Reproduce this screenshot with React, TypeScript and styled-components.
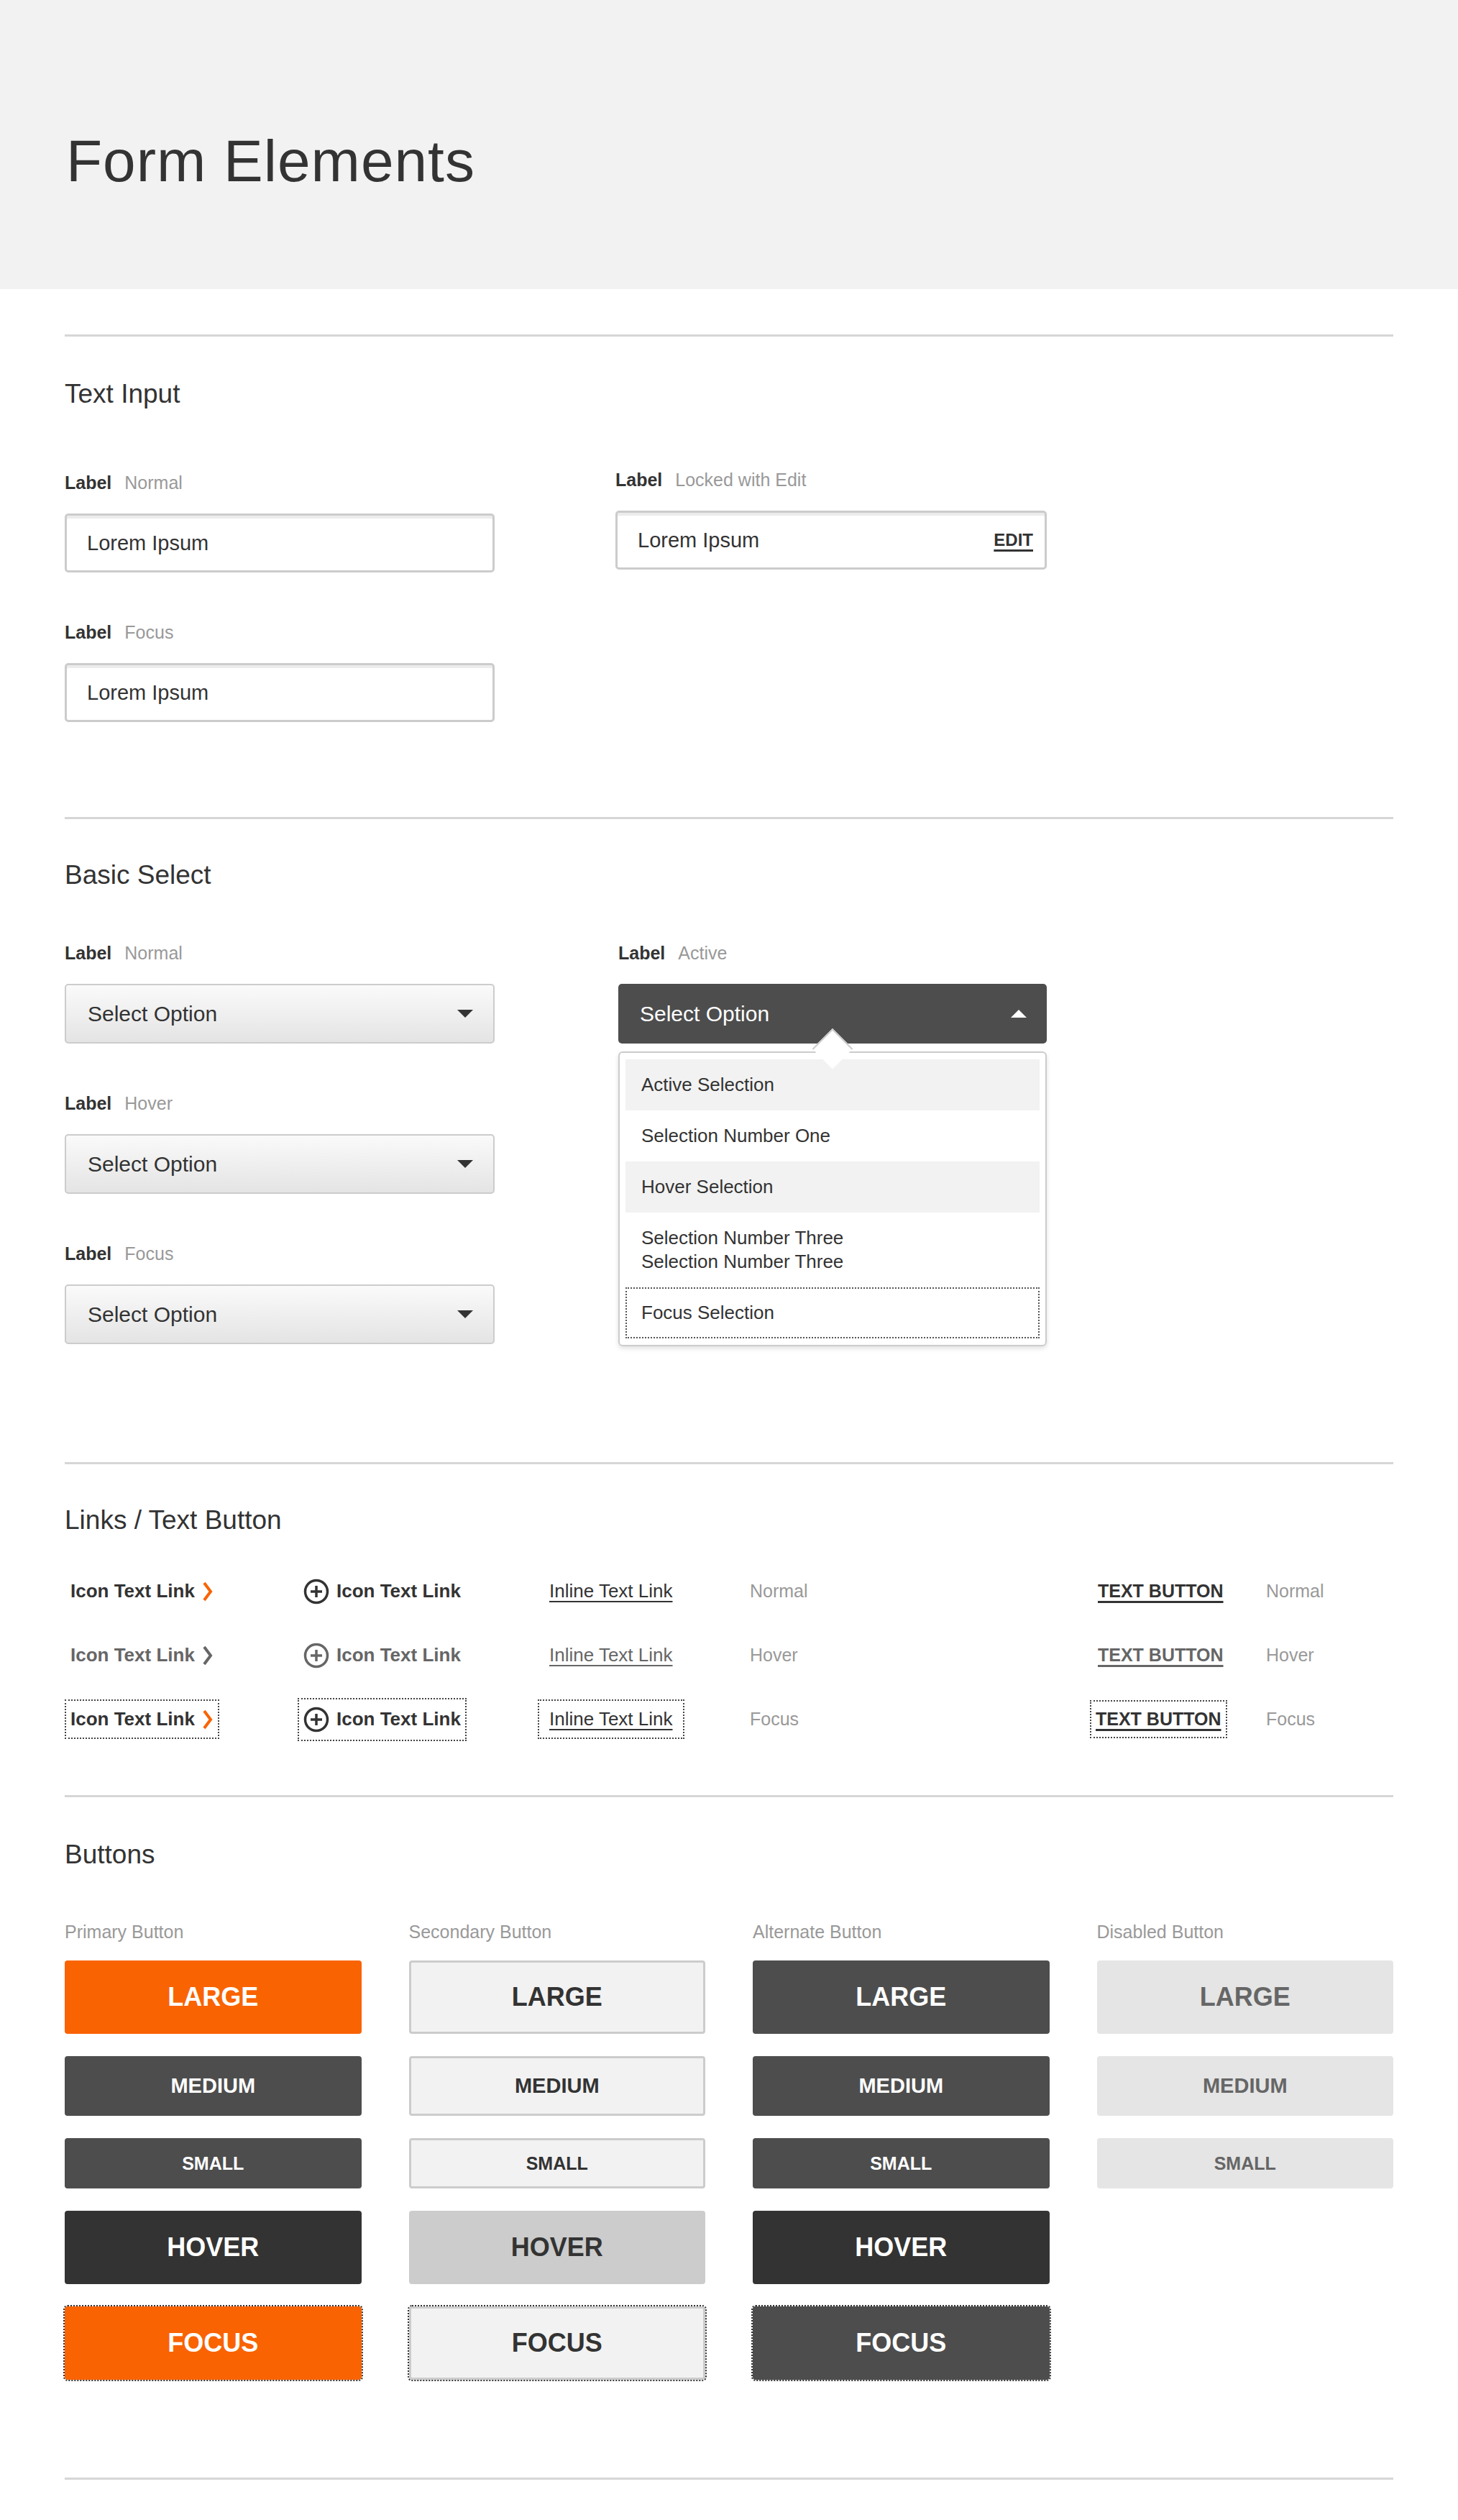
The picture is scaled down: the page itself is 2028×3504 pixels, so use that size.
import React from 'react';
import styled, { createGlobalStyle, css } from 'styled-components';

const Global = createGlobalStyle`
  body { margin: 0; background: #fff; font-family: "Liberation Sans", Arial, sans-serif; color: #333; }
`;

const Header = styled.header`
  background: #f2f2f2;
  height: 402px;
  box-sizing: border-box;
  padding: 222px 0 0 92px;
`;
const Title = styled.h1`
  margin: 0;
  font-weight: 300;
  font-size: 82px;
  line-height: 100px;
  color: #333;
  font-family: "Liberation Sans", Arial, sans-serif;
  letter-spacing: 1px;
  transform: translateY(-48px);
`;

const Content = styled.main`
  padding: 63px 90px 0;
`;

const Rule = styled.hr<{ $after: number }>`
  border: 0;
  border-top: 3px solid #d6d6d6;
  margin: 0 0 ${(p) => p.$after}px;
`;

const SectionTitle = styled.h2`
  margin: 0;
  font-weight: 400;
  font-size: 37px;
  line-height: 44px;
  color: #333;
`;

const TwoCols = styled.div<{ $top: number; $bottom: number }>`
  display: grid;
  grid-template-columns: 598px 600px;
  column-gap: 168px;
  margin: ${(p) => p.$top}px 0 ${(p) => p.$bottom}px;
  align-items: start;
`;

const Stack = styled.div`
  display: flex;
  flex-direction: column;
  gap: 68px;
`;

const Field = styled.div`
  display: flex;
  flex-direction: column;
  gap: 28px;
`;

const LabelRow = styled.div`
  font-size: 25px;
  line-height: 30px;
  display: flex;
  gap: 18px;
`;
const LabelStrong = styled.span`
  font-weight: 700;
  color: #333;
`;
const LabelState = styled.span`
  color: #999;
`;

const InputBox = styled.div`
  height: 82px;
  box-sizing: border-box;
  border: 3px solid #ccc;
  border-radius: 5px;
  box-shadow: inset 0 4px 0 #ececec;
  display: flex;
  align-items: center;
  justify-content: space-between;
  padding: 0 16px 0 28px;
  font-size: 29px;
  color: #333;
`;
const EditLink = styled.span`
  font-weight: 700;
  font-size: 24px;
  text-decoration: underline;
  text-underline-offset: 5px;
  text-decoration-thickness: 3px;
`;

const SelectBox = styled.div<{ $active?: boolean }>`
  height: 83px;
  box-sizing: border-box;
  border-radius: 5px;
  display: flex;
  align-items: center;
  justify-content: space-between;
  padding: 0 28px 0 30px;
  font-size: 30px;
  position: relative;
  ${(p) =>
    p.$active
      ? css`
          background: #4d4d4d;
          color: #fff;
        `
      : css`
          background: linear-gradient(#fafafa, #e4e4e4);
          border: 2px solid #ccc;
          color: #333;
        `}
`;
const Caret = styled.span<{ $up?: boolean }>`
  width: 0;
  height: 0;
  border-left: 11px solid transparent;
  border-right: 11px solid transparent;
  ${(p) =>
    p.$up ? css`border-bottom: 11px solid #fff;` : css`border-top: 11px solid #333;`}
`;
const Notch = styled.span`
  position: absolute;
  left: 50%;
  bottom: -16px;
  width: 38px;
  height: 38px;
  background: #fff;
  border-left: 2px solid #ccc;
  border-top: 2px solid #ccc;
  transform: translateX(-50%) rotate(45deg) translate(8px, 8px);
  z-index: 2;
`;
const ActiveWrap = styled.div`
  display: flex;
  flex-direction: column;
  gap: 11px;
`;
const Dropdown = styled.ul`
  list-style: none;
  margin: 0;
  padding: 9px 8px;
  border: 2px solid #ccc;
  border-radius: 6px;
  box-shadow: 0 3px 6px rgba(0, 0, 0, 0.12);
  position: relative;
  z-index: 1;
`;
const Option = styled.li<{ $shade?: boolean; $focus?: boolean }>`
  padding: 17px 20px;
  font-size: 26px;
  line-height: 33px;
  color: #333;
  background: ${(p) => (p.$shade ? '#f2f2f2' : 'transparent')};
  border: 2px ${(p) => (p.$focus ? 'dotted #555' : 'solid transparent')};
`;

const LinkGrid = styled.div`
  display: grid;
  grid-template-columns: 324px 334px 295px 473px 245px 1fr;
  grid-auto-rows: 89px;
  align-items: center;
  margin: 32px 0 61px;
`;
const LinkItem = styled.span<{ $hover?: boolean; $focus?: boolean; $underline?: boolean; $caps?: boolean }>`
  justify-self: start;
  display: inline-flex;
  align-items: center;
  gap: 10px;
  font-size: ${(p) => (p.$caps ? 25 : 26)}px;
  font-weight: ${(p) => (p.$underline && !p.$caps ? 400 : 700)};
  color: ${(p) => (p.$hover ? '#666' : '#333')};
  padding: 10px 6px;
  border: 2px ${(p) => (p.$focus ? 'dotted #444' : 'solid transparent')};
  ${(p) =>
    p.$underline &&
    css`
      text-decoration: underline;
      text-underline-offset: 5px;
      text-decoration-thickness: ${p.$caps ? 3 : 2}px;
    `}
`;
const StateText = styled.span`
  font-size: 25px;
  color: #999;
`;

const Chevron = ({ color }: { color: string }) => (
  <svg width="16" height="28" viewBox="0 0 16 28">
    <path d="M3 2 L12 14 L3 26" fill="none" stroke={color} strokeWidth="4" />
  </svg>
);
const PlusCircle = ({ color }: { color: string }) => (
  <svg width="36" height="36" viewBox="0 0 36 36">
    <circle cx="18" cy="18" r="15.5" fill="none" stroke={color} strokeWidth="3.5" />
    <path d="M18 10 V26 M10 18 H26" stroke={color} strokeWidth="3.5" />
  </svg>
);

const ButtonGrid = styled.div`
  display: grid;
  grid-template-columns: repeat(4, 1fr);
  column-gap: 66px;
  margin: 70px 0 136px;
`;
const ButtonCol = styled.div`
  display: flex;
  flex-direction: column;
  gap: 31px;
`;
const ColLabel = styled.div`
  font-size: 25px;
  line-height: 30px;
  color: #999;
  margin-bottom: -6px;
`;

type Kind = 'primary' | 'secondary' | 'alternate' | 'disabled';
type Size = 'large' | 'medium' | 'small';
const heights: Record<Size, number> = { large: 102, medium: 83, small: 70 };
const fonts: Record<Size, number> = { large: 36, medium: 29, small: 25 };

const Btn = styled.div<{ $kind: Kind; $size: Size; $hover?: boolean; $focus?: boolean; $dark?: boolean }>`
  height: ${(p) => heights[p.$size]}px;
  box-sizing: border-box;
  border-radius: 4px;
  display: flex;
  align-items: center;
  justify-content: center;
  font-weight: 700;
  font-size: ${(p) => fonts[p.$size]}px;
  ${(p) => {
    if (p.$kind === 'disabled') return css`background: #e5e5e5; color: #666;`;
    if (p.$kind === 'secondary')
      return p.$hover
        ? css`background: #ccc; color: #333;`
        : css`background: #f2f2f2; color: #333; border: 3px solid #ccc;`;
    if (p.$hover) return css`background: #333; color: #fff;`;
    if (p.$kind === 'primary' && !p.$dark) return css`background: #f96302; color: #fff;`;
    return css`background: #4d4d4d; color: #fff;`;
  }}
  ${(p) =>
    p.$focus &&
    css`
      outline: 2px dotted #333;
      outline-offset: 0;
    `}
`;

const cols: { label: string; kind: Kind }[] = [
  { label: 'Primary Button', kind: 'primary' },
  { label: 'Secondary Button', kind: 'secondary' },
  { label: 'Alternate Button', kind: 'alternate' },
  { label: 'Disabled Button', kind: 'disabled' },
];

const Label = ({ state }: { state: string }) => (
  <LabelRow>
    <LabelStrong>Label</LabelStrong>
    <LabelState>{state}</LabelState>
  </LabelRow>
);

export default function App() {
  const linkRows = [
    { state: 'Normal', hover: false, focus: false },
    { state: 'Hover', hover: true, focus: false },
    { state: 'Focus', hover: false, focus: true },
  ];
  return (
    <>
      <Global />
      <Header>
        <Title>Form Elements</Title>
      </Header>
      <Content>
        <Rule $after={58} />
        <SectionTitle>Text Input</SectionTitle>
        <TwoCols $top={86} $bottom={132}>
          <Stack>
            <Field>
              <Label state="Normal" />
              <InputBox>Lorem Ipsum</InputBox>
            </Field>
            <Field>
              <Label state="Focus" />
              <InputBox>Lorem Ipsum</InputBox>
            </Field>
          </Stack>
          <Field style={{ marginTop: -4 }}>
            <Label state="Locked with Edit" />
            <InputBox>
              Lorem Ipsum<EditLink>EDIT</EditLink>
            </InputBox>
          </Field>
        </TwoCols>

        <Rule $after={56} />
        <SectionTitle>Basic Select</SectionTitle>
        <TwoCols $top={71} $bottom={161}>
          <Stack>
            {['Normal', 'Hover', 'Focus'].map((s) => (
              <Field key={s}>
                <Label state={s} />
                <SelectBox>
                  Select Option
                  <Caret />
                </SelectBox>
              </Field>
            ))}
          </Stack>
          <Field style={{ marginLeft: 4 }}>
            <Label state="Active" />
            <ActiveWrap>
              <SelectBox $active>
                Select Option
                <Caret $up />
                <Notch />
              </SelectBox>
              <Dropdown>
                <Option $shade>Active Selection</Option>
                <Option>Selection Number One</Option>
                <Option $shade>Hover Selection</Option>
                <Option>
                  Selection Number Three
                  <br />
                  Selection Number Three
                </Option>
                <Option $focus>Focus Selection</Option>
              </Dropdown>
            </ActiveWrap>
          </Field>
        </TwoCols>

        <Rule $after={56} />
        <SectionTitle>Links / Text Button</SectionTitle>
        <LinkGrid>
          {linkRows.map((r) => {
            const c = r.hover ? '#666' : '#333';
            return (
              <React.Fragment key={r.state}>
                <LinkItem $hover={r.hover} $focus={r.focus}>
                  Icon Text Link <Chevron color={r.hover ? '#666' : '#f96302'} />
                </LinkItem>
                <LinkItem $hover={r.hover} $focus={r.focus}>
                  <PlusCircle color={c} />
                  Icon Text Link
                </LinkItem>
                <LinkItem $hover={r.hover} $focus={r.focus} $underline style={r.focus ? { padding: '10px 14px' } : { marginLeft: 8 }}>
                  Inline Text Link
                </LinkItem>
                <StateText>{r.state}</StateText>
                <LinkItem $hover={r.hover} $focus={r.focus} $underline $caps style={r.focus ? undefined : { marginLeft: 3 }}>
                  TEXT BUTTON
                </LinkItem>
                <StateText>{r.state}</StateText>
              </React.Fragment>
            );
          })}
        </LinkGrid>

        <Rule $after={58} />
        <SectionTitle>Buttons</SectionTitle>
        <ButtonGrid>
          {cols.map((col) => (
            <ButtonCol key={col.kind}>
              <ColLabel>{col.label}</ColLabel>
              <Btn $kind={col.kind} $size="large">LARGE</Btn>
              <Btn $kind={col.kind} $size="medium" $dark>MEDIUM</Btn>
              <Btn $kind={col.kind} $size="small" $dark>SMALL</Btn>
              {col.kind !== 'disabled' && (
                <>
                  <Btn $kind={col.kind} $size="large" $hover>HOVER</Btn>
                  <Btn $kind={col.kind} $size="large" $focus>FOCUS</Btn>
                </>
              )}
            </ButtonCol>
          ))}
        </ButtonGrid>
        <Rule $after={88} />
      </Content>
    </>
  );
}
